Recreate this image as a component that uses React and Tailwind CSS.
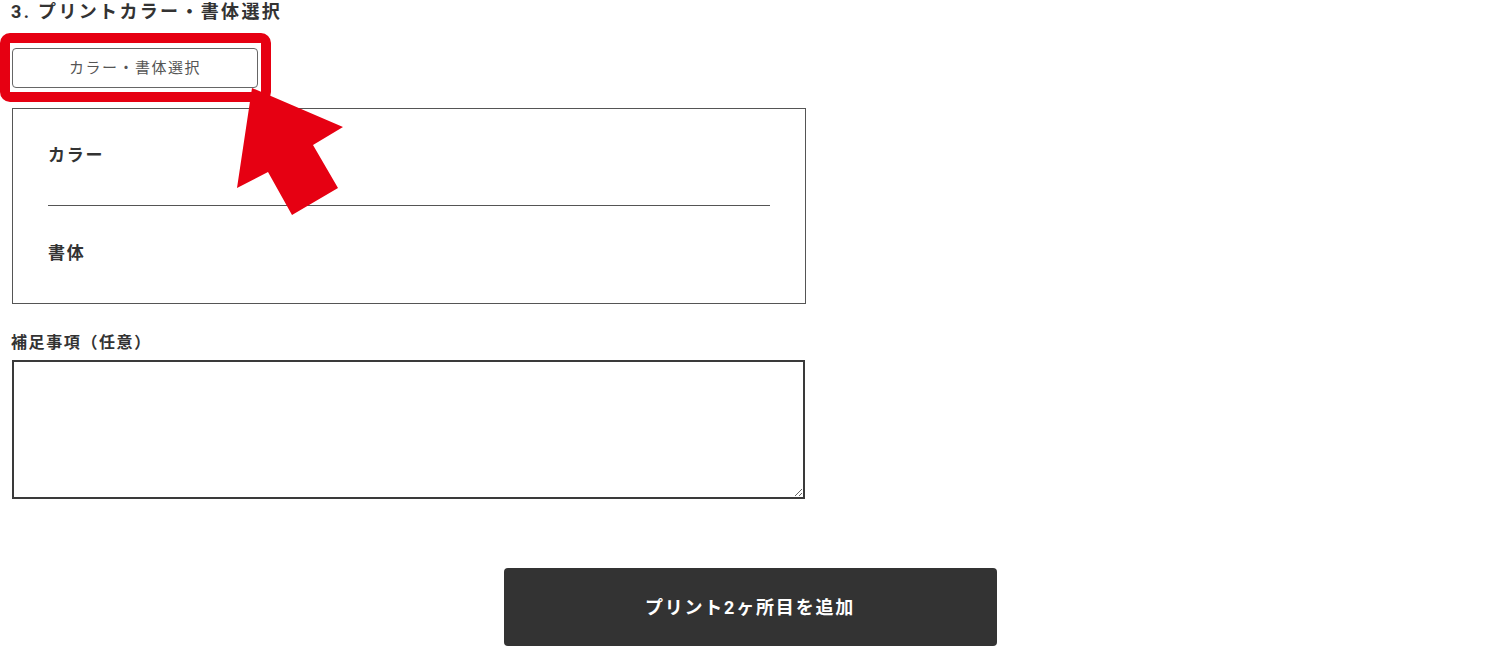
import React from "react";

const font = { fontFamily: 'Roboto, "Noto Sans CJK JP", sans-serif' };

const PointerArrow = () => (
  <svg
    className="absolute left-[232px] top-[84px] pointer-events-none"
    width="116"
    height="136"
    viewBox="232 84 116 136"
  >
    <polygon
      points="252,88 343,127 313,145 338,188 292,215 268,172 237,188"
      fill="#e60012"
    />
  </svg>
);

const App = () => {
  return (
    <div className="w-[1500px] h-[646px] bg-white overflow-hidden text-[#333]" style={font}>
      <div className="relative w-[806px] pl-[11px]">
        <h2 className="text-[18px] leading-[24px] font-bold tracking-[0.13em]">
          3. プリントカラー・書体選択
        </h2>

        <div className="pt-[24px] pl-[1px]">
          <button
            type="button"
            className="w-[246px] h-[40px] border-[1.5px] border-[#666] rounded-[4px] bg-white text-[15px] tracking-[0.1em] text-[#555]"
          >
            カラー・書体選択
          </button>
        </div>

        {/* highlight frame */}
        <div className="absolute left-0 top-[33px] w-[271px] h-[69px] border-[10px] border-[#e60012] rounded-[10px] pointer-events-none" />

        <div className="mt-[20px] ml-[1px] w-[794px] border border-[#555] px-[35px]">
          <div className="h-[97px] flex items-center border-b border-[#555] pb-[3px]">
            <span className="text-[17px] font-bold tracking-[0.1em]">カラー</span>
          </div>
          <div className="h-[97px] flex items-center pb-[2px]">
            <span className="text-[17px] font-bold tracking-[0.1em]">書体</span>
          </div>
        </div>

        <p className="mt-[27px] text-[16px] leading-[24px] font-bold tracking-[0.1em]">
          補足事項（任意）
        </p>
        <textarea className="block mt-[5px] ml-[1px] w-[793px] h-[139px] border-2 border-[#3a3a3a] outline-none p-2" />

        <PointerArrow />
      </div>

      <div className="flex justify-center mt-[69px]">
        <button
          type="button"
          className="w-[493px] h-[78px] bg-[#333] rounded-[4px] text-white text-[18px] font-bold tracking-[0.1em]"
        >
          プリント2ヶ所目を追加
        </button>
      </div>
    </div>
  );
};

export default App;
